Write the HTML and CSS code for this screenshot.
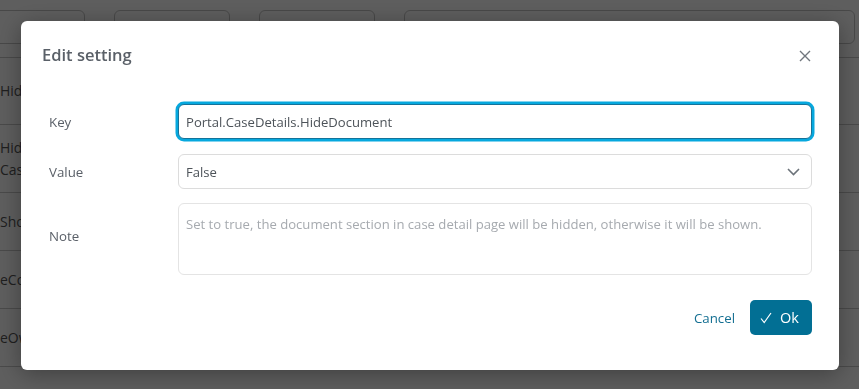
FILE: index.html
```html
<!DOCTYPE html>
<html lang="en">
<head>
  <meta charset="UTF-8">
  <title>Portal settings</title>
  <link rel="stylesheet" href="styles.css">
</head>
<body>
  <div class="page">
    <div class="toolbar">
      <span class="tool tool-first"></span>
      <span class="tool"></span>
      <span class="tool"></span>
      <span class="tool tool-search"></span>
    </div>
    <div class="table">
      <div class="row row-head"></div>
      <div class="row row-1">Hide</div>
      <div class="row row-2">Hide<br>Case</div>
      <div class="row row-3">Show</div>
      <div class="row row-4">eCo</div>
      <div class="row row-5">eOw</div>
    </div>
  </div>

  <div class="backdrop">
    <div class="dialog">
      <div class="dialog-header">
        <h2>Edit setting</h2>
        <button class="close" type="button">
          <svg width="12" height="12" viewBox="0 0 12 12"><path d="M1 1L11 11M11 1L1 11" stroke="#70767d" stroke-width="1.4" fill="none"/></svg>
        </button>
      </div>

      <form class="dialog-body">
        <label for="key">Key</label>
        <input id="key" class="field field-focus" type="text" value="Portal.CaseDetails.HideDocument">

        <label for="value">Value</label>
        <div id="value" class="field select">
          <span>False</span>
          <svg width="13" height="8" viewBox="0 0 13 8"><path d="M1 1L6.5 6.5L12 1" stroke="#6c737a" stroke-width="1.6" fill="none"/></svg>
        </div>

        <label for="note" class="note-label">Note</label>
        <textarea id="note" class="field note" placeholder="Set to true, the document section in case detail page will be hidden, otherwise it will be shown."></textarea>
      </form>

      <div class="dialog-footer">
        <a class="cancel" href="#">Cancel</a>
        <button class="ok" type="button">
          <svg width="12" height="12" viewBox="0 0 12 12"><path d="M1 6.5L4.2 10.5L11 1" stroke="#fff" stroke-width="1.2" fill="none"/></svg>
          Ok
        </button>
      </div>
    </div>
  </div>
</body>
</html>
```

FILE: styles.css
```css
body {
  margin: 0;
  background-color: #ffffff;
  font-family: 'Open Sans', 'Noto Sans', sans-serif;
  color: #495057;
  overflow: hidden;
}

/* page behind the modal */
.page {
  height: 389px;
}

.toolbar {
  display: flex;
  gap: 29px;
  padding: 10px 4px 0 0;
  margin-left: -40px;
  height: 34px;
}

.tool {
  border: 1px solid #c4c4c4;
  border-radius: 6px;
  width: 114px;
  height: 32px;
}

.tool-first {
  width: 123px;
}

.tool-search {
  flex: 1;
}

.row {
  border-bottom: 1px solid #c8c8c8;
  display: flex;
  flex-direction: column;
  justify-content: center;
  font-size: 14px;
  line-height: 22px;
  color: #555;
  height: 57px;
}

.row-head {
  height: 13px;
}

.row-1 { height: 66px; }
.row-2 { height: 67px; }

/* modal */
.backdrop {
  position: fixed;
  inset: 0;
  background-color: rgba(0, 0, 0, 0.63);
  padding: 21px 20px 0 21px;
}

.dialog {
  background-color: #fff;
  border-radius: 6px;
  box-shadow: 0 4px 24px rgba(0, 0, 0, 0.35);
}

.dialog-header {
  display: flex;
  align-items: center;
  justify-content: space-between;
  padding: 22px 28px 0 21px;
}

.dialog-header h2 {
  margin: 0;
  font-size: 16.5px;
  line-height: 24px;
  font-weight: 600;
  color: #5a6068;
}

.close {
  background: none;
  border: none;
  padding: 0;
  display: flex;
  margin-top: 2px;
  cursor: pointer;
}

.dialog-body {
  display: grid;
  grid-template-columns: 129px 1fr;
  row-gap: 15px;
  align-items: center;
  padding: 37px 27px 0 28px;
  margin: 0;
}

.dialog-body label {
  font-size: 13.3px;
  color: #5a6068;
}

.dialog-body .note-label {
  margin-top: -8px;
}

.field {
  box-sizing: border-box;
  height: 35px;
  border: 1px solid #dcdcdc;
  border-radius: 6px;
  padding: 0 7px;
  font-family: inherit;
  font-size: 13.1px;
  color: #4d5359;
  background: #fff;
}

.field-focus {
  border-color: #14739a;
  box-shadow: 0 0 0 2.5px #06a8de;
  outline: none;
}

.select {
  display: flex;
  align-items: center;
  justify-content: space-between;
  padding-right: 11px;
}

.note {
  height: 72px;
  margin-top: -1px;
  padding-top: 10px;
  resize: none;
  border-color: #e4e4e4;
  line-height: 20px;
}

.note::placeholder {
  color: #a6aaaf;
}

.dialog-footer {
  display: flex;
  justify-content: flex-end;
  align-items: center;
  gap: 15px;
  padding: 25px 27px 35px 0;
}

.cancel {
  font-size: 13.3px;
  color: #146f92;
  text-decoration: none;
}

.ok {
  display: flex;
  align-items: center;
  gap: 8px;
  height: 35px;
  width: 62px;
  padding: 0 0 0 10px;
  border: none;
  border-radius: 5px;
  background-color: #026f94;
  color: #fff;
  font-family: inherit;
  font-size: 14.5px;
  cursor: pointer;
}
```
